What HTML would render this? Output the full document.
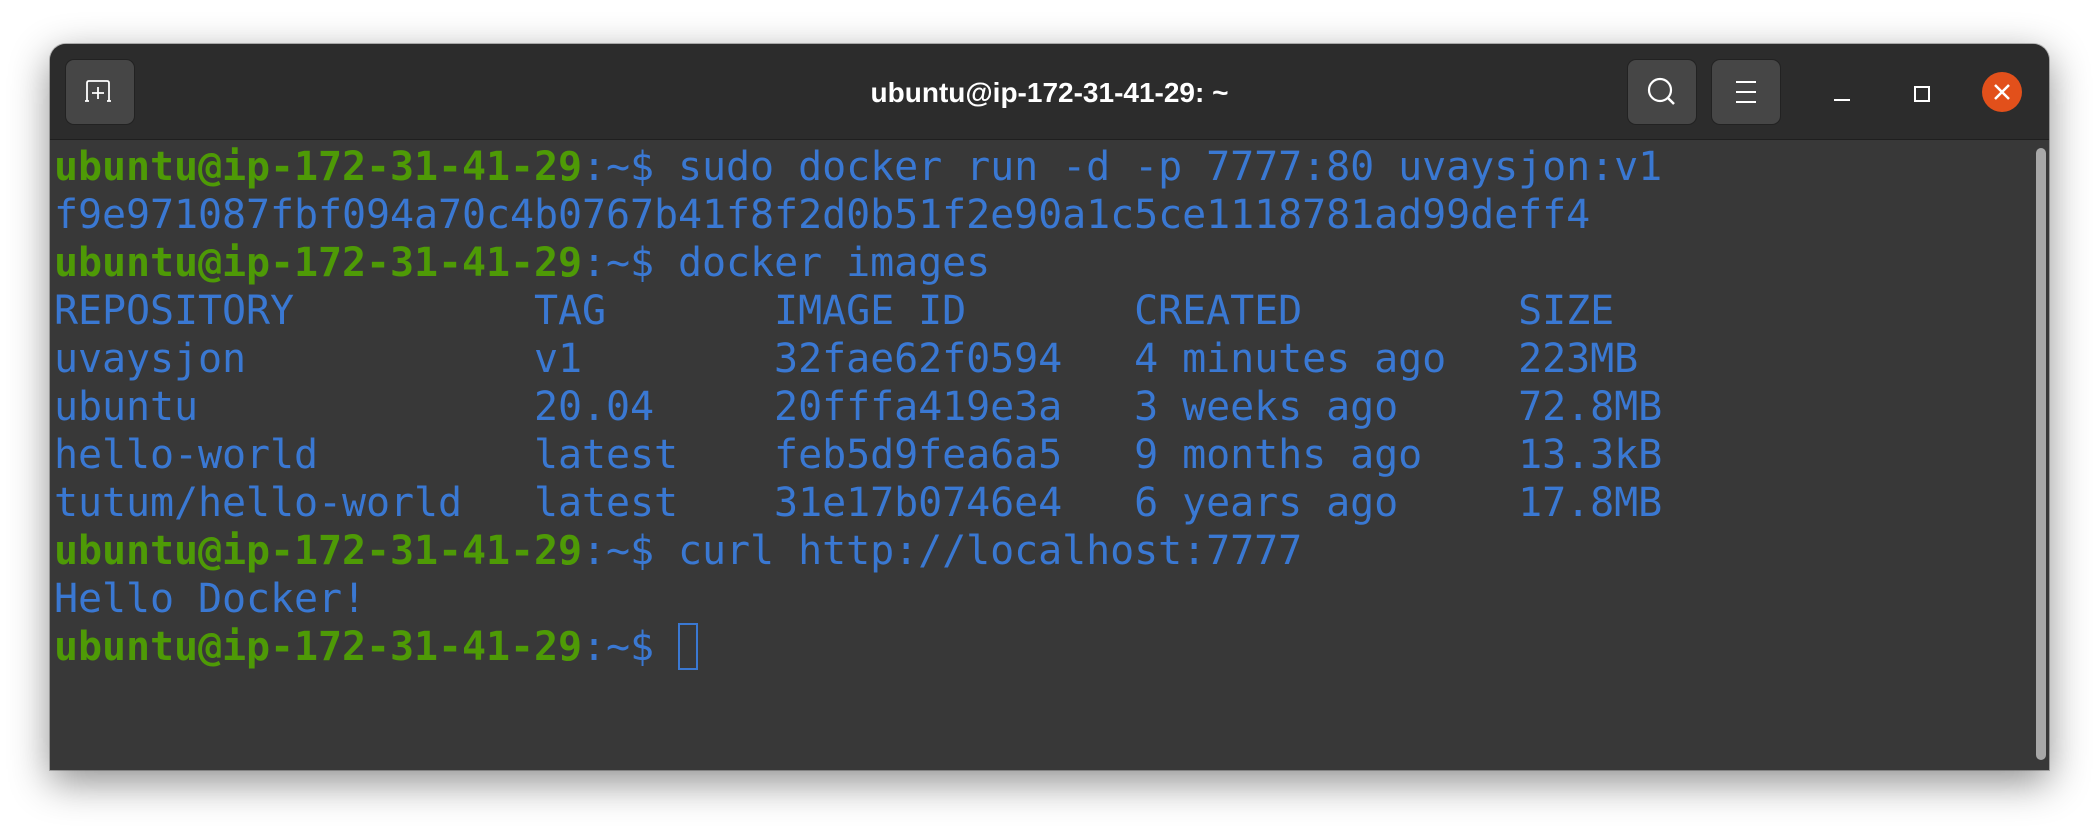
<!DOCTYPE html>
<html><head><meta charset="utf-8"><style>
html,body{margin:0;padding:0;background:#fff;width:2100px;height:826px;overflow:hidden}
.win{position:absolute;left:50px;top:44px;width:1999px;height:726px;background:#383838;border-radius:16px 16px 0 0;box-shadow:0 12px 40px rgba(0,0,0,.45),0 0 0 1px rgba(0,0,0,.25);overflow:hidden}
.hdr{position:absolute;left:0;top:0;width:100%;height:95px;background:#2c2c2c;border-bottom:1px solid #1f1f1f}
.btn{position:absolute;top:16px;width:68px;height:64px;background:#464646;border-radius:8px;box-shadow:0 0 0 1px #222}
.title{position:absolute;left:0;right:0;top:33px;text-align:center;color:#fff;font:bold 28px "Liberation Sans",sans-serif}
pre{position:absolute;left:4px;top:99px;margin:0;font:40px/48px "DejaVu Sans Mono","Liberation Mono",monospace;letter-spacing:-0.08px;color:#3a78d2}
.g{color:#4e9a06;font-weight:bold}
.cur{display:inline-block;width:20px;height:47px;border:2px solid #3a78d2;box-sizing:border-box;vertical-align:-10px}
.sb{position:absolute;left:1986px;top:104px;width:10px;height:612px;background:#a8a8a8;border-radius:5px}
</style></head><body>
<div class="win">
<div class="hdr">
 <div class="btn" style="left:16px"><svg width="68" height="64" viewBox="0 0 68 64"><path d="M21 41V23q0-2 2-2h18q2 0 2 2v18M19 41h4M41 41h4M32 27v12M26 33h12" stroke="#fff" stroke-width="1.8" fill="none"/></svg></div>
 <div class="title">ubuntu@ip-172-31-41-29: ~</div>
 <div class="btn" style="left:1578px"><svg width="68" height="64" viewBox="0 0 68 64"><circle cx="32" cy="30" r="11" stroke="#fff" stroke-width="2.2" fill="none"/><path d="M40 38l6 6" stroke="#fff" stroke-width="2.5"/></svg></div>
 <div class="btn" style="left:1662px"><svg width="68" height="64" viewBox="0 0 68 64"><path d="M24 22h20M24 32h20M24 42h20" stroke="#fff" stroke-width="2"/></svg></div>
 <svg style="position:absolute;left:1780px;top:40px" width="24" height="24"><path d="M4 16h16" stroke="#fff" stroke-width="2"/></svg>
 <svg style="position:absolute;left:1860px;top:38px" width="24" height="24"><rect x="5" y="5" width="14" height="14" stroke="#fff" stroke-width="2" fill="none"/></svg>
 <svg style="position:absolute;left:1932px;top:28px" width="40" height="40"><circle cx="20" cy="20" r="20" fill="#e2501b"/><path d="M13 13l14 14M27 13l-14 14" stroke="#fff" stroke-width="2.5"/></svg>
</div>
<pre><span class="g">ubuntu@ip-172-31-41-29</span>:~$ sudo docker run -d -p 7777:80 uvaysjon:v1
f9e971087fbf094a70c4b0767b41f8f2d0b51f2e90a1c5ce1118781ad99deff4
<span class="g">ubuntu@ip-172-31-41-29</span>:~$ docker images
REPOSITORY          TAG       IMAGE ID       CREATED         SIZE
uvaysjon            v1        32fae62f0594   4 minutes ago   223MB
ubuntu              20.04     20fffa419e3a   3 weeks ago     72.8MB
hello-world         latest    feb5d9fea6a5   9 months ago    13.3kB
tutum/hello-world   latest    31e17b0746e4   6 years ago     17.8MB
<span class="g">ubuntu@ip-172-31-41-29</span>:~$ curl http://localhost:7777
Hello Docker!
<span class="g">ubuntu@ip-172-31-41-29</span>:~$ <span class="cur"></span></pre>
<div class="sb"></div>
</div>
</body></html>
